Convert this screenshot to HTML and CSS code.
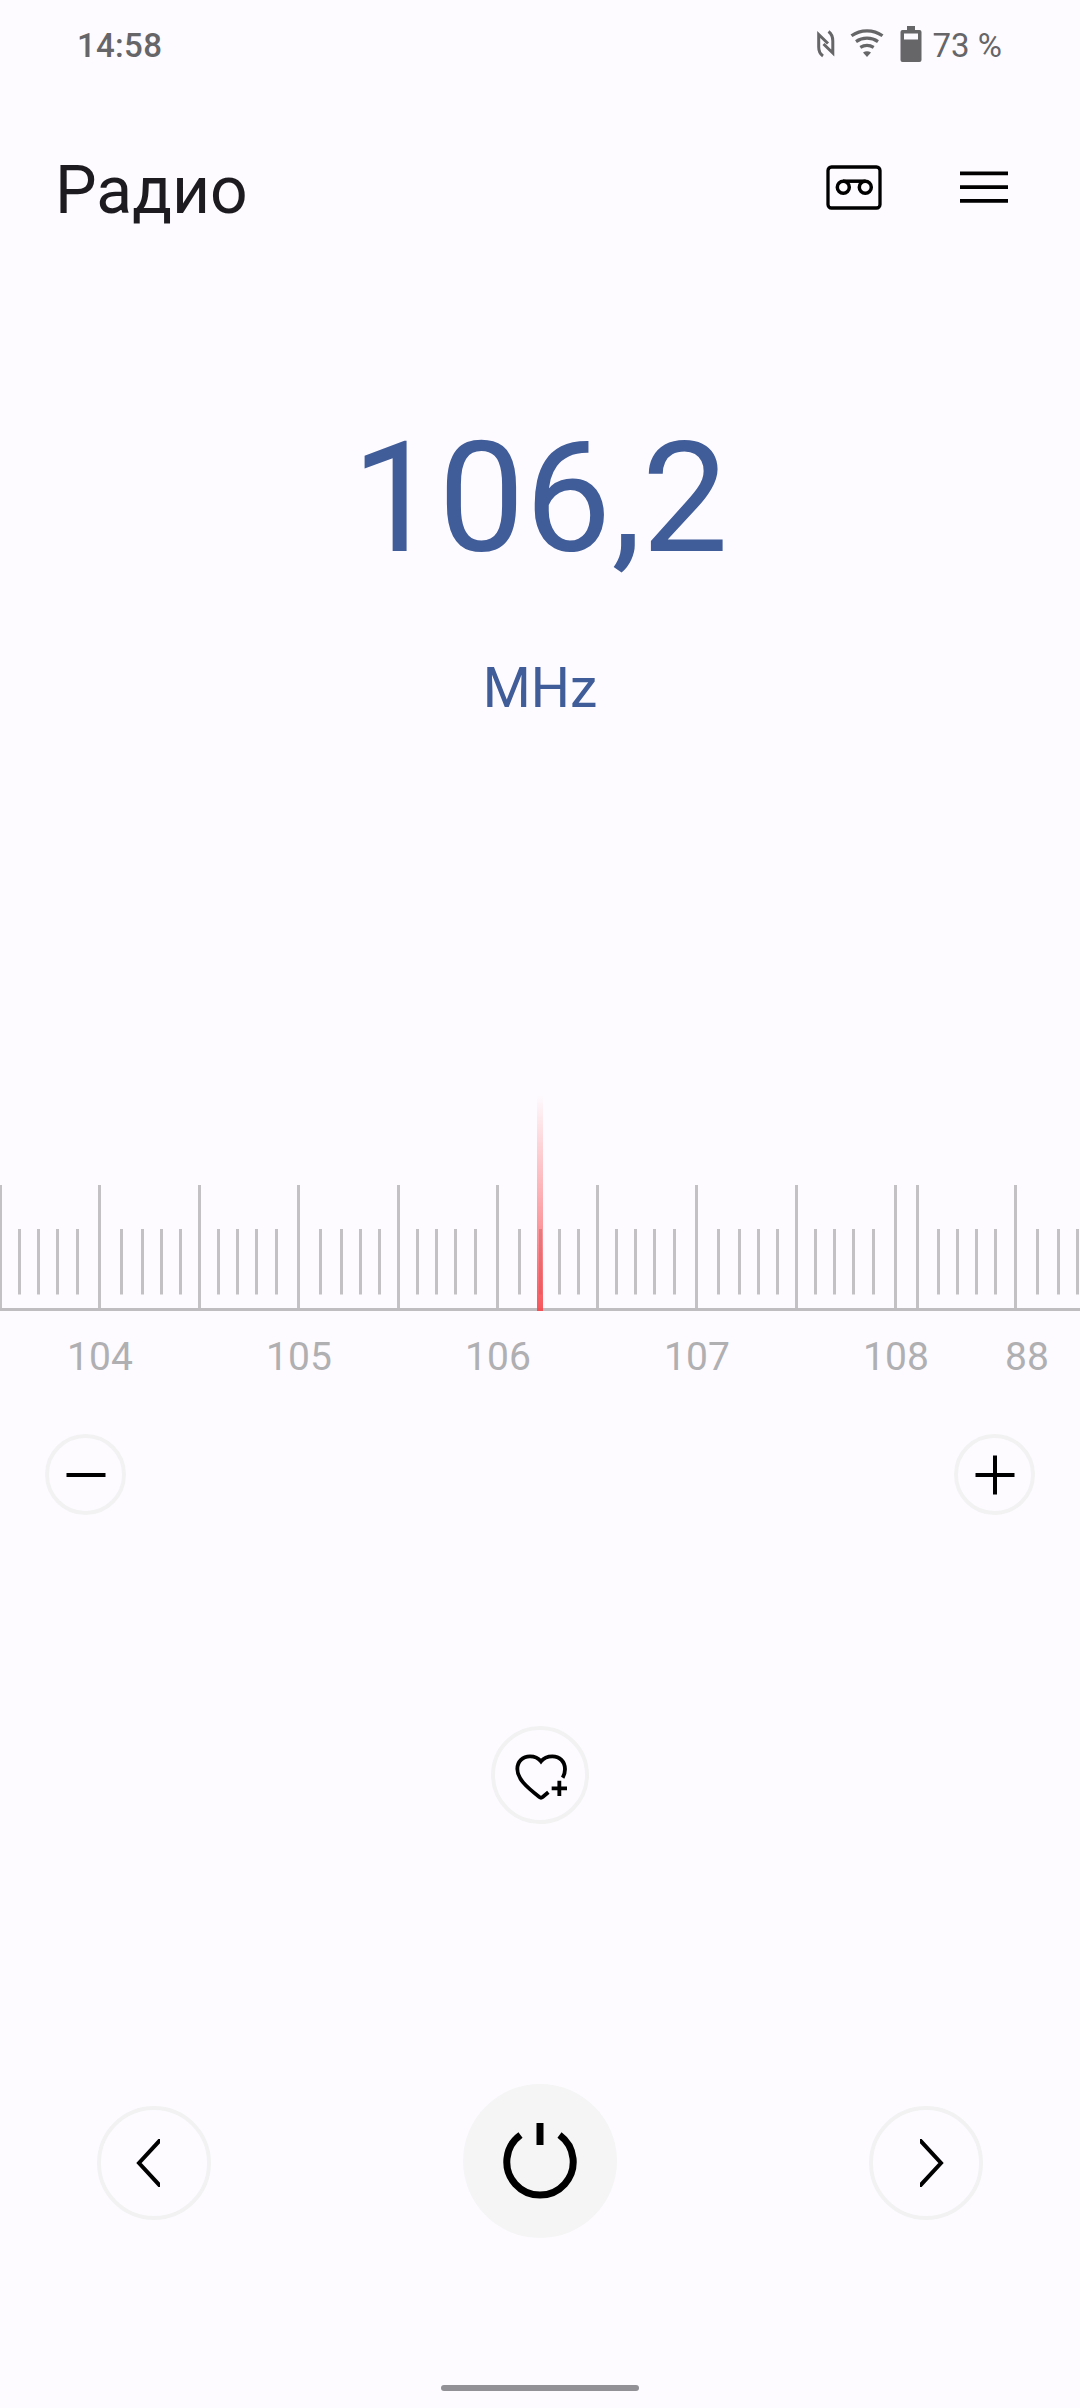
FILE: index.html
```html
<!DOCTYPE html>
<html lang="ru">
<head>
<meta charset="utf-8">
<title>Радио</title>
<link rel="stylesheet" href="styles.css">
</head>
<body>
<div class="screen">
  <div class="status">
    <span class="clock">14:58</span>
    <div class="status-icons">
      <svg class="nfc" width="18" height="28" viewBox="0 0 18 28" fill="none" stroke="#666568" stroke-width="3"><path d="M6 26C3 24 1.700 21 1.700 17V4.500L11 13.500"/><path d="M11.500 1.500C15 4 15.800 7 15.800 11V23L6.500 14"/></svg>
      <svg class="wifi" width="34" height="28" viewBox="0 0 34 28" fill="none" stroke="#666568" stroke-width="3.200"><path d="M1.500 6.800C10.500 .1 23.500 .1 32.500 6.800"/><path d="M6 12.600C12.500 8 21.500 8 28 12.600"/><path d="M10.300 18.400C14.500 15.800 19.500 15.800 23.700 18.400"/><path d="M13 23.500Q17 20.800 21 23.500L17 28Z" fill="#666568" stroke="none"/></svg>
      <svg class="battery" width="22" height="36" viewBox="0 0 22 36"><path fill="#666568" fill-rule="evenodd" d="M7 0h8v4h4.500a2 2 0 0 1 2 2v28a2 2 0 0 1-2 2h-17a2 2 0 0 1-2-2V6a2 2 0 0 1 2-2H7zM4 7.500v6h14v-6z"/></svg>
      <span class="percent">73 %</span>
    </div>
  </div>

  <header class="header">
    <h1 class="title">Радио</h1>
    <div class="actions">
      <svg width="56" height="46" viewBox="0 0 56 46" fill="none" stroke="#000"><rect x="2" y="2" width="52" height="41" rx="3.500" stroke-width="3.300"/><circle cx="17.300" cy="22.300" r="6" stroke-width="3.500"/><circle cx="39.300" cy="22.300" r="6" stroke-width="3.500"/><path d="M17 16.200H39.500" stroke-width="3.500"/></svg>
      <svg width="48" height="32" viewBox="0 0 48 32" stroke="#000" stroke-width="3.800"><path d="M0 2.300H48M0 16.100H48M0 29.900H48"/></svg>
    </div>
  </header>

  <section class="display">
    <div class="frequency">106,2</div>
    <div class="unit">MHz</div>
  </section>

  <svg class="dial" width="1080" height="300" viewBox="0 1090 1080 300">
    <defs>
      <linearGradient id="needle" x1="0" y1="0" x2="0" y2="1">
        <stop offset="0" stop-color="#ff4040" stop-opacity="0"/>
        <stop offset=".5" stop-color="#fb4a50" stop-opacity=".46"/>
        <stop offset="1" stop-color="#f5484e" stop-opacity=".92"/>
      </linearGradient>
    </defs>
    <g class="ticks">
      <path d="M.5 1185V1311M99.500 1185V1311M199.500 1185V1311M298.500 1185V1311M398.500 1185V1311M497.500 1185V1311M597.500 1185V1311M696.500 1185V1311M796.500 1185V1311M895.500 1185V1311M917.500 1185V1311M1015.500 1185V1311"/>
      <path d="M19.500 1229v65.600M38.500 1229v65.600M57.500 1229v65.600M77.500 1229v65.600M121.500 1229v65.600M142.500 1229v65.600M161.500 1229v65.600M180.500 1229v65.600M218.500 1229v65.600M237.500 1229v65.600M256.500 1229v65.600M276.500 1229v65.600M320.500 1229v65.600M341.500 1229v65.600M360.500 1229v65.600M379.500 1229v65.600M417.500 1229v65.600M436.500 1229v65.600M455.500 1229v65.600M475.500 1229v65.600M519.500 1229v65.600M540.500 1229v65.600M559.500 1229v65.600M578.500 1229v65.600M616.500 1229v65.600M635.500 1229v65.600M654.500 1229v65.600M674.500 1229v65.600M718.500 1229v65.600M739.500 1229v65.600M758.500 1229v65.600M777.500 1229v65.600M815.500 1229v65.600M834.500 1229v65.600M853.500 1229v65.600M873.500 1229v65.600M938.500 1229v65.600M957.500 1229v65.600M976.500 1229v65.600M995.500 1229v65.600M1037.500 1229v65.600M1058.500 1229v65.600M1077.500 1229v65.600"/>
    </g>
    <rect x="0" y="1308" width="1080" height="3" fill="#bfbdc0"/>
    <rect x="537" y="1095" width="6" height="216" fill="url(#needle)"/>
    <g class="labels">
      <text x="100" y="1370">104</text>
      <text x="299" y="1370">105</text>
      <text x="498" y="1370">106</text>
      <text x="697" y="1370">107</text>
      <text x="896" y="1370">108</text>
      <text x="1027" y="1370">88</text>
    </g>
  </svg>

  <div class="tune">
    <div class="round small"><svg width="40" height="40" viewBox="0 0 40 40"><path d="M.5 20H39.500" stroke="#000" stroke-width="4"/></svg></div>
    <div class="round small"><svg width="40" height="40" viewBox="0 0 40 40"><path d="M.5 20H39.500M20 .5V39.500" stroke="#000" stroke-width="4"/></svg></div>
  </div>

  <div class="round favorite">
    <svg width="54" height="48" viewBox="131 157 162 144" fill="none" stroke="#000" stroke-width="11.500"><path d="M234 275L217 289Q212 293 207 289C165 256 141 233 141 205C141 183 157 167 179 167C193 167 204 172 212 182C220 172 231 167 246 167C268 167 284 183 284 206C284 215 282 223 277 231"/><path d="M244 263H290M267 240V286"/></svg>
  </div>

  <div class="controls">
    <div class="round seek"><svg class="prev" width="24" height="48" viewBox="0 0 24 48" fill="none" stroke="#000" stroke-width="4"><path d="M26 -1L3 24L26 49"/></svg></div>
    <div class="power"><svg width="74" height="78" viewBox="0 0 74 78" fill="none" stroke="#000" stroke-width="7"><path d="M17.500 14A33.200 33.200 0 1 0 56.500 14M37 2V24"/></svg></div>
    <div class="round seek"><svg class="next" width="24" height="48" viewBox="0 0 24 48" fill="none" stroke="#000" stroke-width="4"><path d="M-2 -1L21 24L-2 49"/></svg></div>
  </div>

  <div class="home"></div>
</div>
</body>
</html>
```

FILE: styles.css
```css
* { box-sizing: border-box; }

body {
  margin: 0;
  background: #fdfbff;
  font-family: Roboto, sans-serif;
}

svg { display: block; flex: none; }

.screen {
  display: flex;
  flex-direction: column;
  width: 1080px;
  height: 2408px;
  overflow: hidden;
}

.status {
  display: flex;
  justify-content: space-between;
  height: 90px;
  padding: 26px 78px 0 77px;
  color: #666568;
  font-size: 33px;
  line-height: 40px;
}

.clock { font-weight: 500; letter-spacing: .3px; }
.status-icons { display: flex; align-items: flex-start; }
.nfc { margin: 4px 15px 0 0; }
.wifi { margin: 3px 16px 0 0; }
.battery { margin: 0 11px 0 0; }

.header {
  display: flex;
  justify-content: space-between;
  height: 190px;
  padding: 61px 72px 0 55px;
}

.title {
  margin: 0;
  color: #1d1b1f;
  font-size: 66px;
  font-weight: 400;
  line-height: 80px;
}

.actions { display: flex; align-items: flex-start; gap: 78px; padding-top: 14px; }
.actions svg + svg { margin-top: 6px; }

.display {
  height: 810px;
  padding-top: 119px;
  color: #405c99;
  text-align: center;
}

.frequency { font-size: 154px; line-height: 200px; }
.unit { margin-top: 59px; font-size: 55px; line-height: 60px; }

.ticks { fill: none; stroke: #c3c1c4; stroke-width: 3; }

.labels {
  fill: #b0afb2;
  font-size: 39px;
  text-anchor: middle;
}

.round {
  display: flex;
  align-items: center;
  justify-content: center;
  flex: none;
  border: 4px solid #f2f2f3;
  border-radius: 50%;
}

.tune {
  display: flex;
  justify-content: space-between;
  margin-top: 44px;
  padding: 0 45px;
}

.small { width: 81px; height: 81px; }

.favorite {
  width: 98px;
  height: 98px;
  margin: 211px auto 0;
}
.favorite svg { margin: 3px 0 0 1px; }

.controls {
  display: flex;
  align-items: center;
  justify-content: space-between;
  margin-top: 260px;
  padding: 0 97px;
}

.seek { width: 114px; height: 114px; margin-top: 4px; }
.prev { margin-right: 12px; }
.next { margin-left: 12px; }

.power {
  display: flex;
  align-items: center;
  justify-content: center;
  width: 154px;
  height: 154px;
  border-radius: 50%;
  background: #f5f5f5;
}

.power svg { margin-top: -2px; }

.home {
  width: 198px;
  height: 6px;
  margin: 147px auto 0;
  border-radius: 3px;
  background: #929195;
}
```
